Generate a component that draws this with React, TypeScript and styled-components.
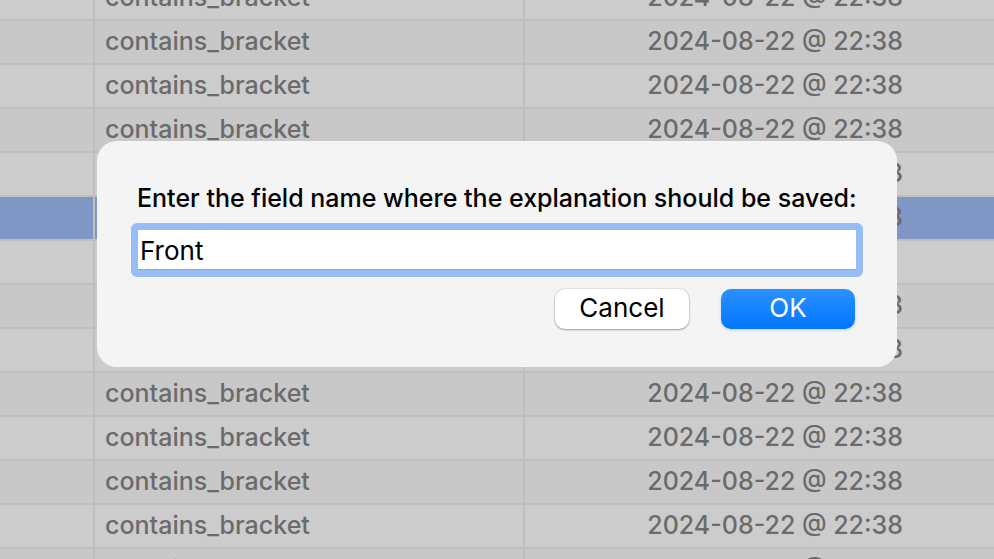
import React, { useState } from "react";
import styled, { createGlobalStyle } from "styled-components";

const GlobalStyle = createGlobalStyle`
  *, *::before, *::after { box-sizing: border-box; }
  body {
    margin: 0;
    background: #cccccc;
    font-family: Inter, "Liberation Sans", sans-serif;
    font-size: 25px;
    font-weight: 500;
  }
`;

const Browser = styled.main`
  height: 100vh;
  overflow: hidden;
`;

const CardTable = styled.table`
  width: 100%;
  margin-top: -23px;
  table-layout: fixed;
  border-collapse: separate;
  border-spacing: 0;
  color: #6b6b6b;
  font: inherit;
`;

const Column = styled.col<{ $width?: number }>`
  width: ${({ $width }) => ($width ? `${$width}px` : "auto")};
`;

const Row = styled.tr<{ $selected?: boolean }>`
  height: 44px;
  background: ${({ $selected }) => ($selected ? "#8096c5" : "#cccccc")};
  &:nth-child(even) {
    background: ${({ $selected }) => ($selected ? "#8096c5" : "#c8c8c8")};
  }
`;

const Cell = styled.td<{ $align?: "right" }>`
  height: 44px;
  padding: ${({ $align }) => ($align ? "0 91px 2px 10px" : "0 10px 2px")};
  border-bottom: 2px solid #bebebe;
  border-right: 2px solid #bebebe;
  line-height: 40px;
  text-align: ${({ $align }) => $align ?? "left"};
  white-space: nowrap;
  &:last-child { border-right: 0; }
`;

const Overlay = styled.div`
  position: fixed;
  inset: 0;
  display: flex;
  justify-content: center;
  align-items: flex-start;
  padding: 141px 16px 16px;
`;

const Dialog = styled.form`
  width: 800px;
  max-width: 100%;
  padding: 38px 40px;
  border-radius: 20px;
  background: #f4f4f4;
  color: #000;
`;

const Label = styled.label`
  display: block;
  padding-bottom: 6px;
  line-height: 38px;
  white-space: nowrap;
`;

const FieldFrame = styled.div`
  margin: 0 -6px;
  padding: 7px;
  border-radius: 6px;
  background: #98bdf5;
`;

const TextField = styled.input`
  display: block;
  width: 100%;
  height: 40px;
  padding: 2px 2px 0;
  border: 0;
  border-bottom: 1px solid #92a5c4;
  border-radius: 0;
  outline: 0;
  background: #fff;
  color: #000;
  font: inherit;
  font-size: 26px;
  font-weight: 400;
`;

const Actions = styled.div`
  display: flex;
  justify-content: flex-end;
  gap: 32px;
  padding: 12px 2px 0 0;
`;

const Button = styled.button<{ $primary?: boolean }>`
  width: 134px;
  height: 40px;
  padding: 0 0 2px;
  border: 0;
  border-radius: 10px;
  background: ${({ $primary }) => ($primary ? "linear-gradient(#2a91ff, #0077ff)" : "#fff")};
  color: ${({ $primary }) => ($primary ? "#fff" : "#000")};
  box-shadow: ${({ $primary }) =>
    $primary ? "0 1px 3px rgba(0, 90, 220, 0.25)" : "0 0 1px 1px rgba(0, 0, 0, 0.08), 0 1px 2px rgba(0, 0, 0, 0.3)"};
  font: inherit;
  font-size: 26px;
  font-weight: 400;
  line-height: 38px;
`;

const DATE = "2024-08-22 @ 22:38";
const cards = Array.from({ length: 14 }, (_, i) => ({
  id: i,
  field: "contains_bracket",
  date: i === 6 ? "" : DATE,
  selected: i === 5,
}));

export default function App() {
  const [name, setName] = useState("Front");
  return (
    <>
      <GlobalStyle />
      <Browser>
        <CardTable>
          <colgroup>
            <Column $width={95} />
            <Column $width={430} />
            <Column />
          </colgroup>
          <tbody>
            {cards.map((card) => (
              <Row key={card.id} $selected={card.selected}>
                <Cell />
                <Cell>{card.field}</Cell>
                <Cell $align="right">{card.date}</Cell>
              </Row>
            ))}
          </tbody>
        </CardTable>
      </Browser>
      <Overlay>
        <Dialog role="dialog" aria-modal="true" onSubmit={(e) => e.preventDefault()}>
          <Label htmlFor="field-name">Enter the field name where the explanation should be saved:</Label>
          <FieldFrame>
            <TextField id="field-name" type="text" value={name} onChange={(e) => setName(e.target.value)} />
          </FieldFrame>
          <Actions>
            <Button type="button">Cancel</Button>
            <Button type="submit" $primary>OK</Button>
          </Actions>
        </Dialog>
      </Overlay>
    </>
  );
}
